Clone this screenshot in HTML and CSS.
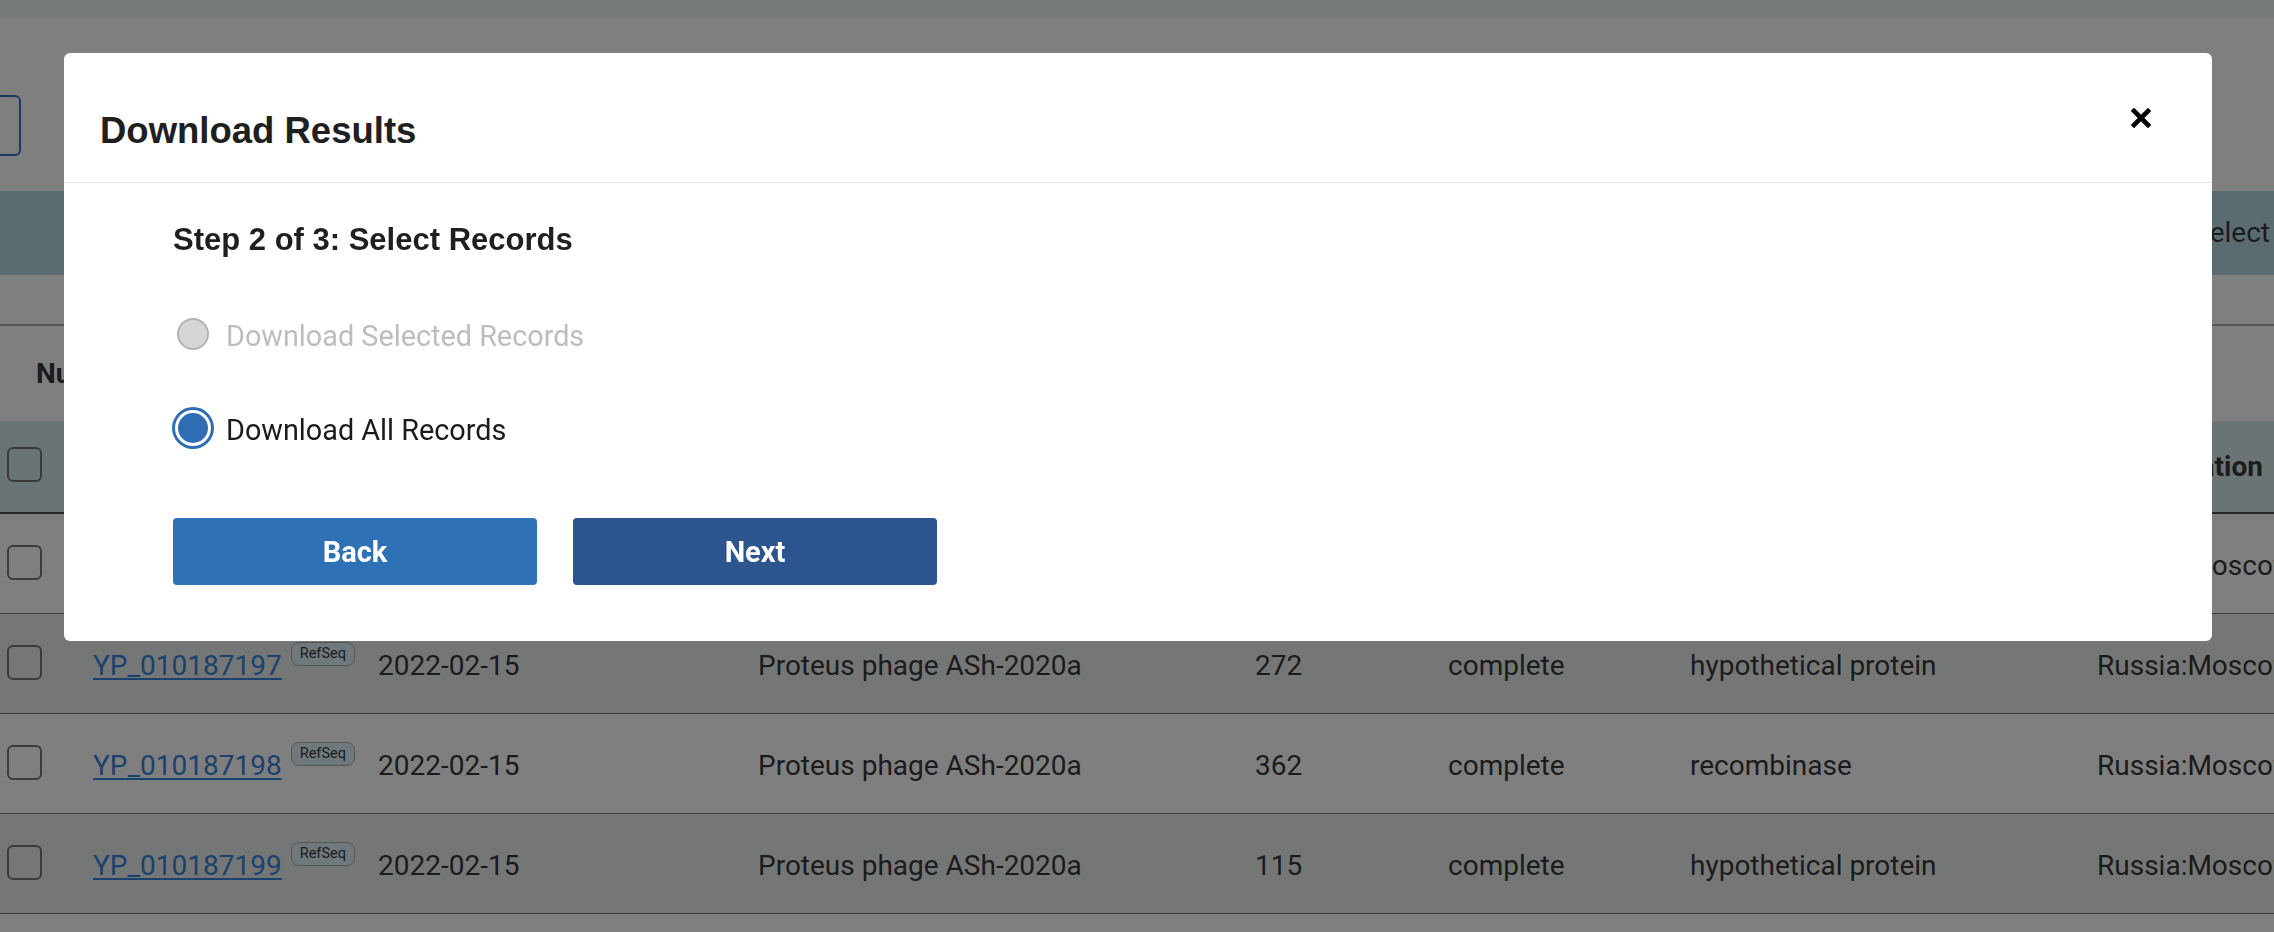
FILE: index.html
```html
<!DOCTYPE html>
<html lang="en">
<head>
<meta charset="utf-8">
<title>Download Results</title>
<link rel="stylesheet" href="styles.css">
</head>
<body>
<div class="page">
  <div class="topbar"></div>
  <div class="searchrow">
    <div class="searchbox"></div>
  </div>
  <div class="actionbar">
    <span class="action">Select</span>
  </div>
  <div class="spacer"></div>
  <div class="table">
    <div class="toolbar-row"><span class="th">Nucleotide</span></div>
    <div class="row head">
      <span class="cb"></span>
      <span class="th">Accession</span>
      <span class="th">Release Date</span>
      <span class="th">Species</span>
      <span class="th">Length</span>
      <span class="th">Completeness</span>
      <span class="th">Protein</span>
      <span class="th">Geo Location</span>
    </div>
    <div class="row light">
      <span class="cb"></span>
      <span class="acc"><a class="link" href="#">YP_010187196</a><span class="badge">RefSeq</span></span>
      <span>2022-02-15</span>
      <span>Proteus phage ASh-2020a</span>
      <span>188</span>
      <span>complete</span>
      <span>hypothetical protein</span>
      <span>Russia:Moscow</span>
    </div>
    <div class="row dark">
      <span class="cb"></span>
      <span class="acc"><a class="link" href="#">YP_010187197</a><span class="badge">RefSeq</span></span>
      <span>2022-02-15</span>
      <span>Proteus phage ASh-2020a</span>
      <span>272</span>
      <span>complete</span>
      <span>hypothetical protein</span>
      <span>Russia:Moscow</span>
    </div>
    <div class="row light">
      <span class="cb"></span>
      <span class="acc"><a class="link" href="#">YP_010187198</a><span class="badge">RefSeq</span></span>
      <span>2022-02-15</span>
      <span>Proteus phage ASh-2020a</span>
      <span>362</span>
      <span>complete</span>
      <span>recombinase</span>
      <span>Russia:Moscow</span>
    </div>
    <div class="row dark">
      <span class="cb"></span>
      <span class="acc"><a class="link" href="#">YP_010187199</a><span class="badge">RefSeq</span></span>
      <span>2022-02-15</span>
      <span>Proteus phage ASh-2020a</span>
      <span>115</span>
      <span>complete</span>
      <span>hypothetical protein</span>
      <span>Russia:Moscow</span>
    </div>
  </div>
</div>

<div class="modal" role="dialog" aria-labelledby="mtitle">
  <div class="modal-header">
    <h2 class="modal-title" id="mtitle">Download Results</h2>
    <button class="close" aria-label="Close">
      <svg width="20" height="20" viewBox="0 0 20 20"><path d="M3 3L17 17M17 3L3 17" stroke="#000" stroke-width="4.6" stroke-linecap="square" fill="none"/></svg>
    </button>
  </div>
  <div class="modal-body">
    <h3 class="step">Step 2 of 3: Select Records</h3>
    <div class="options">
      <label class="opt disabled"><span class="radio"></span><span>Download Selected Records</span></label>
      <label class="opt"><span class="radio checked"></span><span>Download All Records</span></label>
    </div>
    <div class="buttons">
      <button class="btn back">Back</button>
      <button class="btn next">Next</button>
    </div>
  </div>
</div>
</body>
</html>
```
FILE: styles.css
```css
* { box-sizing: border-box; }
html, body { margin: 0; padding: 0; }
body {
  width: 2274px;
  height: 932px;
  overflow: hidden;
  background: #7f7f7f;
  font-family: Roboto, "Liberation Sans", sans-serif;
  font-size: 28px;
  color: #1b1b1b;
}
.page { width: 2274px; }
.topbar { height: 18px; background: #767a7b; }
.searchrow { height: 173px; padding-top: 77px; display: flex; }
.searchbox {
  width: 300px; height: 61px; margin-left: -279px;
  border: 2px solid #1d3862; border-radius: 6px;
}
.actionbar {
  height: 84px; background: #5a6c70;
  display: flex; align-items: center; justify-content: flex-end;
  overflow: hidden;
}
.action { line-height: 32px; margin-right: 4px; }
.spacer { height: 49px; }
.table { border-top: 2px solid #555; }
.toolbar-row {
  height: 95px; display: flex; align-items: center; padding-left: 36px;
}
.th { font-weight: 700; line-height: 32px; white-space: nowrap; }
.row {
  display: grid;
  grid-template-columns: 86px 285px 380px 497px 193px 242px 407px 1fr;
  align-items: center;
  padding-left: 7px;
  height: 100px;
  border-bottom: 1px solid #3c3c3c;
  white-space: nowrap;
  line-height: 32px;
  padding-top: 4px;
}
.row.head {
  height: 93px; background: #6b7475; border-bottom: 2px solid #262626;
  padding-top: 0;
}
.row.head .cb { margin-top: -4px; }
.row.light { background: #7f7f7f; }
.row.dark { background: #757777; }
.cb {
  width: 35px; height: 35px; border: 2px solid #3b3b3b; border-radius: 6px;
  margin-top: -6px;
}
.acc { display: flex; align-items: flex-start; }
.link { color: #1b416f; text-decoration: underline; text-decoration-thickness: 2px; text-underline-offset: 3px; }
.badge {
  margin-left: 9px; margin-top: -8px;
  height: 24px; padding: 0 8px;
  border: 1px solid #555; border-radius: 8px;
  background: #6f797b;
  font-size: 14.5px; line-height: 22px; color: #1b1b1b;
}

.modal {
  position: fixed; left: 64px; top: 53px; width: 2148px;
  background: #fff; border-radius: 6px;
}
.modal-header {
  height: 130px; border-bottom: 1px solid #e6e6e6;
  display: flex; align-items: center; justify-content: space-between;
  padding: 0 61px 0 36px;
}
.modal-title {
  margin: 27px 0 0; font-family: "Liberation Sans", Arial, sans-serif;
  font-weight: 700; font-size: 36.5px; line-height: 40px; color: #1f1f1f;
}
.close {
  border: 0; background: none; padding: 0; width: 20px; height: 20px;
  display: flex; cursor: pointer;
}
.modal-body { padding: 40px 0 56px 109px; }
.step {
  margin: 0; font-family: "Liberation Sans", Arial, sans-serif;
  font-weight: 700; font-size: 31px; line-height: 34px; color: #1f1f1f;
}
.options { display: flex; flex-direction: column; gap: 52px; margin-top: 56px; }
.opt {
  height: 42px; display: flex; align-items: center; gap: 17px;
  font-size: 28.8px; line-height: 32px; color: #1b1b1b; padding-left: 4px;
}
.opt span:last-child { padding-top: 3px; }
.opt.disabled { color: #bdbdbd; }
.radio {
  width: 32px; height: 32px; border-radius: 50%;
  background: #d6d6d9; border: 2px solid #b3b3b3; flex: none;
}
.radio.checked {
  width: 30px; height: 30px; margin: 0 1px;
  background: #2e6db4; border: 0;
  box-shadow: 0 0 0 3px #fff, 0 0 0 6px #2e6db4;
}
.buttons { display: flex; gap: 36px; margin-top: 69px; }
.btn {
  width: 364px; height: 67px; border: 0; border-radius: 4px;
  font-family: Roboto, sans-serif; font-weight: 700; font-size: 29px;
  color: #fff; cursor: pointer;
}
.btn.back { background: #2e71b7; }
.btn.next { background: #2c548e; }
```
